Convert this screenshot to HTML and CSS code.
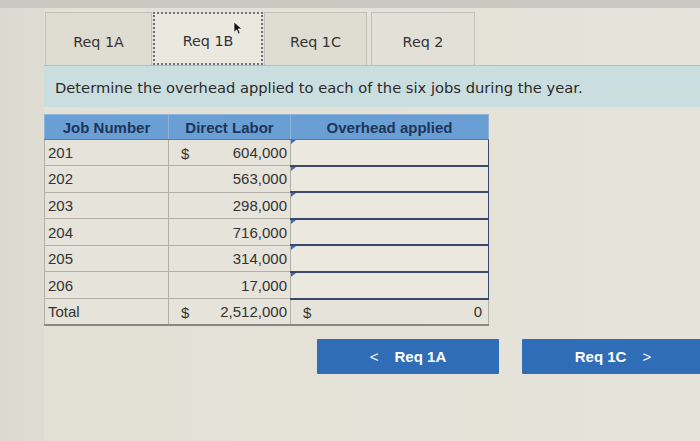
FILE: index.html
```html
<!DOCTYPE html>
<html>
<head>
<meta charset="utf-8">
<link rel="stylesheet" href="styles.css">
</head>
<body>
<div class="topbar"></div>
<div class="page">
  <div class="tabs">
    <div class="tab t1">Req 1A</div>
    <div class="tab active">Req 1B<svg class="cursor" viewBox="0 0 10 16" width="9" height="14"><path d="M1 1 L1 13 L4 10 L6 15 L8 14 L6 9 L10 9 Z" fill="#111" stroke="#fff" stroke-width="0.8"/></svg></div>
    <div class="tab t3">Req 1C</div>
    <div class="tab t4">Req 2</div>
  </div>
  <div class="band">Determine the overhead applied to each of the six jobs during the year.</div>
  <table class="grid">
    <thead>
      <tr><th class="c1">Job Number</th><th class="c2">Direct Labor</th><th class="c3">Overhead applied</th></tr>
    </thead>
    <tbody>
      <tr><td>201</td><td class="num"><span class="dol">$</span>604,000</td><td class="inp"><div class="box"></div></td></tr>
      <tr><td>202</td><td class="num">563,000</td><td class="inp"><div class="box"></div></td></tr>
      <tr><td>203</td><td class="num">298,000</td><td class="inp"><div class="box"></div></td></tr>
      <tr><td>204</td><td class="num">716,000</td><td class="inp"><div class="box"></div></td></tr>
      <tr><td>205</td><td class="num">314,000</td><td class="inp"><div class="box"></div></td></tr>
      <tr><td>206</td><td class="num">17,000</td><td class="inp"><div class="box"></div></td></tr>
      <tr class="total"><td>Total</td><td class="num"><span class="dol">$</span>2,512,000</td><td class="num tot"><span class="dol">$</span>0</td></tr>
    </tbody>
  </table>
  <div class="nav">
    <div class="btn"><span class="chev">&lt;</span>Req 1A</div>
    <div class="btn">Req 1C<span class="chev r">&gt;</span></div>
  </div>
</div>
</body>
</html>
```
FILE: styles.css
```css
html, body {
  margin: 0;
  padding: 0;
}
body {
  width: 700px;
  height: 441px;
  overflow: hidden;
  background: linear-gradient(90deg, #dbd9d0 0, #dfddd3 44px, #e3e0d6 44px, #e6e3da 100%);
  font-family: "DejaVu Sans", Verdana, sans-serif;
  color: #333;
}
.topbar {
  height: 8px;
  background: #cac8c0;
}
.page {
  margin-left: 44px;
}
.tabs {
  display: flex;
  gap: 1px;
  padding-top: 4px;
  padding-left: 1px;
  border-bottom: 1px solid #bdbab2;
}
.tab {
  position: relative;
  height: 53px;
  box-sizing: border-box;
  padding-top: 5px;
  display: flex;
  align-items: center;
  justify-content: center;
  font-size: 14.3px;
  color: #333;
  background: #dfdcd2;
  border: 1px solid #c3c0b7;
  border-bottom: none;
}
.t1 { width: 107px; }
.t3 { width: 103px; }
.t4 { width: 104px; margin-left: 3px; background: #e3e0d7; }
.tab.active {
  width: 110px;
  background: #ebe8e0;
  border: 2px dotted #6a6c78;
  border-bottom: 2px dotted #6a6c78;
}
.cursor {
  position: absolute;
  left: 78px;
  top: 7px;
}
.band {
  height: 41px;
  box-sizing: border-box;
  padding-left: 11px;
  padding-top: 2px;
  display: flex;
  align-items: center;
  background: #cadddf;
  font-size: 14.7px;
  color: #2a2a2a;
}
.grid {
  margin-top: 7px;
  border-collapse: collapse;
  font-family: "Liberation Sans", Arial, sans-serif;
  font-size: 15px;
  color: #333;
}
.grid th {
  height: 24px;
  padding: 0;
  background: #6a9fd5;
  color: #1d3558;
  font-weight: bold;
  font-size: 15px;
  border: 1px solid #8fb2d8;
  border-bottom: 1px solid #55799f;
}
.c1 { width: 123px; }
.c2 { width: 121px; }
.c3 { width: 197px; }
.grid td {
  height: 24.6px;
  padding: 0 2px 0 3px;
  border: 1px solid #b2afa6;
  background: #e6e3da;
  white-space: nowrap;
}
.grid td.num {
  text-align: right;
  position: relative;
  padding-right: 3px;
}
.dol {
  position: absolute;
  left: 12px;
  top: 50%;
  transform: translateY(-50%);
}
.grid td.inp {
  padding: 0;
  position: relative;
  border: 1px solid #3b4868;
  border-bottom: 2px solid #3b4868;
  background: #ebe8e0;
}
.box {
  position: absolute;
  left: 0;
  top: 0;
  width: 0;
  height: 0;
  border-top: 4px solid #3a6fc0;
  border-right: 5px solid transparent;
}
.total td {
  border-bottom: 2px solid #8a8780;
}
.grid td.tot {
  padding-right: 6px;
}
.nav {
  display: flex;
  gap: 23px;
  margin-top: 13px;
  padding-left: 273px;
}
.btn {
  flex: none;
  width: 182px;
  height: 35px;
  box-sizing: border-box;
  background: #2f6db6;
  color: #fff;
  font-family: "Liberation Sans", Arial, sans-serif;
  font-weight: bold;
  font-size: 15px;
  display: flex;
  align-items: center;
  justify-content: center;
  border-radius: 1px;
}
.chev {
  font-weight: normal;
  margin-right: 16px;
  font-size: 15px;
}
.chev.r {
  margin-right: 0;
  margin-left: 16px;
}
```
